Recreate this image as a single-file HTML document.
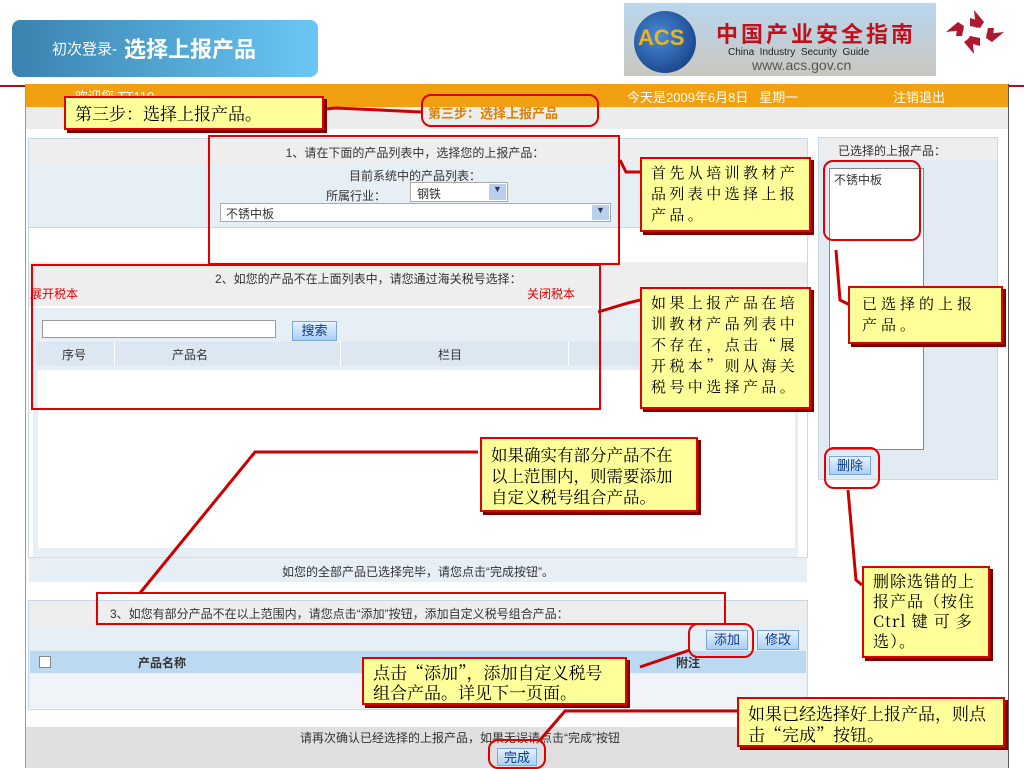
<!DOCTYPE html>
<html><head><meta charset="utf-8"><style>
*{margin:0;padding:0;box-sizing:border-box}
body{width:1024px;height:768px;position:relative;overflow:hidden;background:#fff;font-family:"Liberation Sans","Noto Sans CJK SC",sans-serif;font-size:12px;color:#333}
.a{position:absolute}
.c{text-align:center}
.call{position:absolute;background:#ffff99;border:2px solid #e00000;box-shadow:3px 3px 0 #800000;font-family:"Noto Serif CJK SC","Liberation Serif",serif;font-size:16px;line-height:21px;color:#000;padding:3px 9px}
.rb{position:absolute;border:2px solid #e00000}
.rr{border-radius:10px}
.btn{position:absolute;background:linear-gradient(#e6f2ff,#a9d0f5);border:1px solid #7aa7d8;color:#0a3a8a;font-size:13px;text-align:center;line-height:18px}
</style></head><body>
<div class="a" style="left:12px;top:20px;width:306px;height:57px;border-radius:8px;background:linear-gradient(90deg,#3a82b0,#6ac7f5);color:#fff;"><span class="a" style="left:40px;top:18px;font-size:15px">初次登录-</span><span class="a" style="left:112px;top:12px;font-size:22px;font-weight:bold">选择上报产品</span></div>
<div class="a" style="left:624px;top:3px;width:312px;height:73px;background:linear-gradient(#b9d6ee,#c9c7c0);overflow:hidden">
<div class="a" style="left:10px;top:8px;width:62px;height:62px;border-radius:50%;background:radial-gradient(circle at 40% 40%,#4a8bd8,#0c3074)"></div>
<div class="a" style="left:14px;top:22px;font-size:22px;color:#e8b422;font-weight:bold">ACS</div>
<div class="a" style="left:92px;top:14px;font-size:22px;color:#c0101c;font-weight:bold;letter-spacing:3px">中国产业安全指南</div>
<div class="a" style="left:104px;top:44px;font-size:10px;color:#222">China&nbsp; Industry&nbsp; Security&nbsp; Guide</div>
<div class="a" style="left:128px;top:54px;font-size:14px;color:#555">www.acs.gov.cn</div></div>
<svg class="a" style="left:944px;top:8px" width="64" height="48"><g fill="#b01830"><path d="M30 2l10 12-8 6z"/><path d="M60 24l-12 10-6-8z"/><path d="M30 46l-10-12 8-6z"/><path d="M2 24l12-10 6 8z"/><path d="M26 10l14 4-4 6-10-2zM50 20l-2 14-6-4 2-10zM36 38l-14-4 4-6 10 2zM12 28l2-14 6 4-2 10z"/></g></svg>
<div class="a" style="left:0;top:85px;width:1024px;height:2px;background:#b01010"></div>
<div class="a" style="left:25px;top:84px;width:984px;height:684px;background:#fff;border-left:1px solid #999;border-right:1px solid #555"></div>
<div class="a" style="left:26px;top:84px;width:982px;height:23px;background:#f0a010"></div>
<div class="a" style="left:75px;top:86px;color:#fff;font-size:13px">欢迎您 TT110</div>
<div class="a" style="left:627px;top:87px;color:#fff;font-size:13px">今天是2009年6月8日 &nbsp;&nbsp;星期一</div>
<div class="a" style="left:893px;top:87px;color:#fff;font-size:13px">注销退出</div>
<div class="a" style="left:26px;top:107px;width:982px;height:22px;background:#ececec"></div>
<div class="a" style="left:428px;top:103px;color:#e08000;font-weight:bold;font-size:13px">第三步：选择上报产品</div>
<div class="a" style="left:28px;top:138px;width:780px;height:420px;border:1px solid #c8d8e8;background:#fff"></div>
<div class="a" style="left:29px;top:139px;width:778px;height:24px;background:#eee"></div>
<div class="a c" style="left:210px;top:144px;width:410px;font-size:12px">1、请在下面的产品列表中，选择您的上报产品：</div>
<div class="a" style="left:29px;top:163px;width:778px;height:65px;background:#e6eef6;border-bottom:1px solid #c8d8e8"></div>
<div class="a c" style="left:210px;top:167px;width:410px">目前系统中的产品列表：</div>
<div class="a" style="left:326px;top:187px">所属行业：</div>
<div class="a" style="left:410px;top:182px;width:98px;height:20px;border:1px solid #aaa;background:#fff;padding:2px 6px">钢铁<span class="a" style="right:1px;top:1px;width:17px;height:16px;background:#b8cff0;color:#335;font-size:9px;text-align:center">▼</span></div>
<div class="a" style="left:220px;top:203px;width:391px;height:19px;border:1px solid #aaa;background:#fff;padding:1px 5px">不锈中板<span class="a" style="right:1px;top:1px;width:17px;height:15px;background:#b8cff0;color:#335;font-size:9px;text-align:center">▼</span></div>
<div class="a" style="left:29px;top:262px;width:778px;height:44px;background:#eee"></div>
<div class="a" style="left:215px;top:270px">2、如您的产品不在上面列表中，请您通过海关税号选择：</div>
<div class="a" style="left:30px;top:285px;color:#e00000;font-size:12px">展开税本</div>
<div class="a" style="left:527px;top:285px;color:#e00000;font-size:12px">关闭税本</div>
<div class="a" style="left:33px;top:308px;width:765px;height:250px;background:#e6eef6"></div>
<div class="a" style="left:38px;top:370px;width:757px;height:178px;background:#fff"></div>
<div class="a" style="left:42px;top:320px;width:234px;height:18px;border:1px solid #999;background:#fff"></div>
<div class="btn" style="left:292px;top:321px;width:45px;height:20px">搜索</div>
<div class="a" style="left:36px;top:342px;width:760px;height:24px;background:#dde7f1"></div>
<div class="a" style="left:62px;top:346px">序号</div><div class="a" style="left:172px;top:346px">产品名</div><div class="a" style="left:438px;top:346px">栏目</div>
<div class="a" style="left:114px;top:342px;width:1px;height:24px;background:#fff"></div><div class="a" style="left:340px;top:342px;width:1px;height:24px;background:#fff"></div><div class="a" style="left:568px;top:342px;width:1px;height:24px;background:#fff"></div>
<div class="a" style="left:29px;top:557px;width:778px;height:25px;background:#e6eef6;border-top:1px solid #d0dce8"></div>
<div class="a c" style="left:29px;top:563px;width:778px">如您的全部产品已选择完毕，请您点击“完成按钮”。</div>
<div class="a" style="left:818px;top:137px;width:180px;height:343px;border:1px solid #c8d8e8;background:#e2eaf3"></div>
<div class="a" style="left:819px;top:138px;width:178px;height:22px;background:#eee"></div>
<div class="a" style="left:838px;top:142px">已选择的上报产品：</div>
<div class="a" style="left:829px;top:168px;width:95px;height:282px;border:1px solid #888;background:#fff;padding:2px 4px">不锈中板</div>
<div class="btn" style="left:829px;top:456px;width:42px;height:19px">删除</div>
<div class="a" style="left:28px;top:600px;width:780px;height:110px;border:1px solid #c8d8e8;background:#fff"></div>
<div class="a" style="left:29px;top:601px;width:778px;height:24px;background:#eee"></div>
<div class="a" style="left:110px;top:605px">3、如您有部分产品不在以上范围内，请您点击“添加”按钮，添加自定义税号组合产品：</div>
<div class="a" style="left:29px;top:625px;width:778px;height:83px;background:#e6eef6"></div>
<div class="btn" style="left:706px;top:630px;width:42px;height:20px">添加</div>
<div class="btn" style="left:757px;top:630px;width:42px;height:20px">修改</div>
<div class="a" style="left:30px;top:651px;width:776px;height:22px;background:#bcd9f2"></div>
<div class="a" style="left:39px;top:656px;width:12px;height:12px;border:1px solid #888;background:#fff"></div>
<div class="a" style="left:138px;top:654px;font-weight:bold">产品名称</div>
<div class="a" style="left:676px;top:654px;font-weight:bold">附注</div>
<div class="a" style="left:30px;top:674px;width:776px;height:33px;background:#f0f4f8"></div>
<div class="a" style="left:26px;top:727px;width:982px;height:41px;background:#e0e0e0"></div>
<div class="a" style="left:300px;top:729px">请再次确认已经选择的上报产品，如果无误请点击“完成”按钮</div>
<div class="btn" style="left:497px;top:748px;width:40px;height:18px">完成</div>
<div class="rb rr" style="left:421px;top:94px;width:178px;height:33px"></div>
<div class="rb" style="left:208px;top:135px;width:412px;height:130px"></div>
<div class="rb" style="left:31px;top:264px;width:570px;height:146px"></div>
<div class="rb rr" style="left:823px;top:160px;width:98px;height:81px"></div>
<div class="rb rr" style="left:824px;top:447px;width:56px;height:42px"></div>
<div class="rb" style="left:96px;top:592px;width:630px;height:33px"></div>
<div class="rb rr" style="left:688px;top:623px;width:66px;height:35px"></div>
<div class="rb rr" style="left:488px;top:739px;width:58px;height:30px"></div>
<svg class="a" style="left:0;top:0" width="1024" height="768"><g stroke="#c00" stroke-width="3" fill="none">
<path d="M325 109L336 108L421 112"/><path d="M620 160L626 172L640 172"/>
<path d="M598 312L628 303L640 300"/><path d="M836 250L840 300L850 305"/>
<path d="M848 490L856 580L862 585"/><path d="M478 452L255 452L140 593"/>
<path d="M640 667L690 650"/><path d="M737 711L565 711L540 740"/></g></svg>
<div class="call" style="left:64px;top:96px;width:260px;height:34px;padding-top:4px;font-size:17px">第三步：选择上报产品。</div>
<div class="call" style="left:640px;top:157px;width:171px;height:75px;font-size:15px;letter-spacing:3.4px">首先从培训教材产品列表中选择上报产品。</div>
<div class="call" style="left:640px;top:287px;width:171px;height:122px;font-size:15px;letter-spacing:3.4px">如果上报产品在培训教材产品列表中不存在，点击“展开税本”则从海关税号中选择产品。</div>
<div class="call" style="left:848px;top:286px;width:155px;height:58px;font-size:15px;letter-spacing:4px;padding:5px 10px 0 12px">已选择的上报产品。</div>
<div class="call" style="left:480px;top:437px;width:218px;height:75px;padding-top:5px;font-size:16.5px">如果确实有部分产品不在以上范围内，则需要添加自定义税号组合产品。</div>
<div class="call" style="left:862px;top:566px;width:128px;height:92px;letter-spacing:1px;line-height:20px">删除选错的上报产品（按住Ctrl 键 可 多选）。</div>
<div class="call" style="left:362px;top:657px;width:265px;height:48px;line-height:20px;font-size:17px">点击“添加”，添加自定义税号组合产品。详见下一页面。</div>
<div class="call" style="left:737px;top:697px;width:268px;height:50px;line-height:21px;font-size:17px">如果已经选择好上报产品，则点击“完成”按钮。</div>
</body></html>
